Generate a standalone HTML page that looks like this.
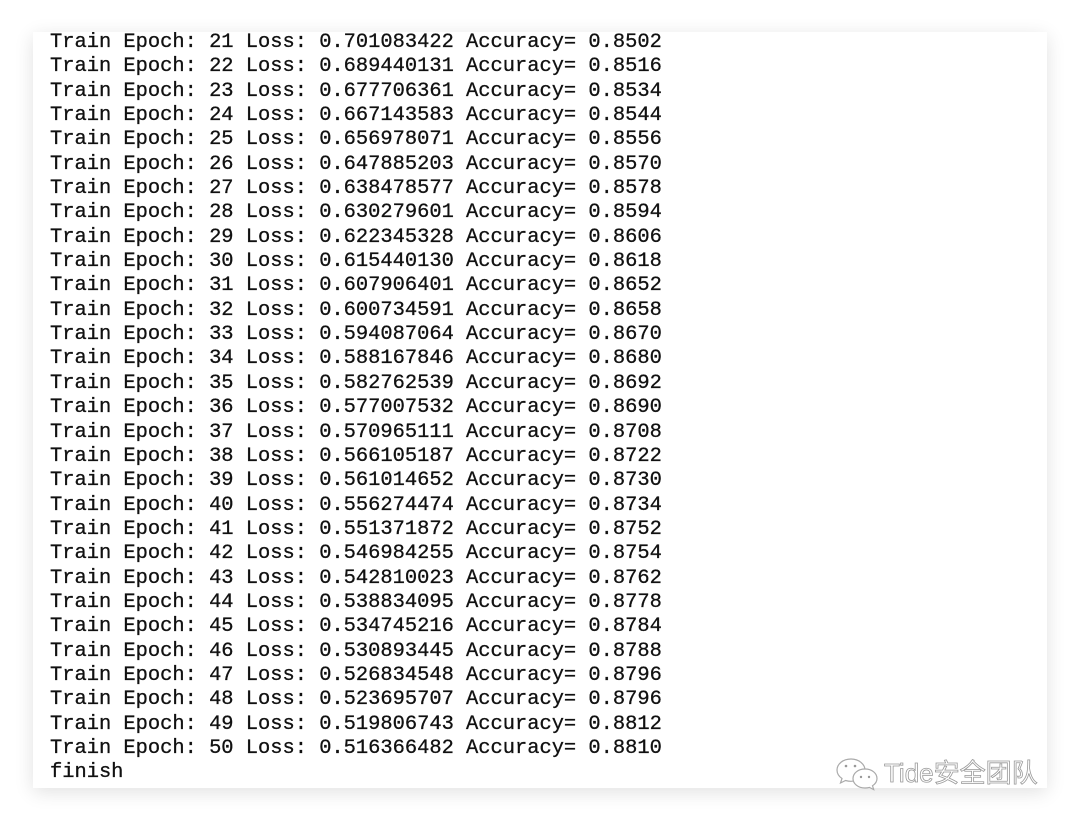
<!DOCTYPE html>
<html><head><meta charset="utf-8"><style>
html,body{margin:0;padding:0;background:#fff;width:1080px;height:822px;overflow:hidden;position:relative}
.card{position:absolute;left:33px;top:32px;width:1014px;height:756px;background:#fff;box-shadow:0 4px 18px rgba(0,0,0,0.12);overflow:hidden}
pre{position:absolute;left:17px;top:-1px;margin:0;font-family:"Liberation Mono",monospace;font-size:20.4px;line-height:24.34px;color:#111;-webkit-text-stroke:0.3px #111}
.wm{position:absolute;left:884px;top:757px;font-family:"Liberation Sans","Noto Sans CJK SC",sans-serif;font-size:26px;line-height:32px;color:#fff;-webkit-text-stroke:0.8px #999;white-space:nowrap}
</style></head><body>
<div class="card"><pre>Train Epoch: 21 Loss: 0.701083422 Accuracy= 0.8502
Train Epoch: 22 Loss: 0.689440131 Accuracy= 0.8516
Train Epoch: 23 Loss: 0.677706361 Accuracy= 0.8534
Train Epoch: 24 Loss: 0.667143583 Accuracy= 0.8544
Train Epoch: 25 Loss: 0.656978071 Accuracy= 0.8556
Train Epoch: 26 Loss: 0.647885203 Accuracy= 0.8570
Train Epoch: 27 Loss: 0.638478577 Accuracy= 0.8578
Train Epoch: 28 Loss: 0.630279601 Accuracy= 0.8594
Train Epoch: 29 Loss: 0.622345328 Accuracy= 0.8606
Train Epoch: 30 Loss: 0.615440130 Accuracy= 0.8618
Train Epoch: 31 Loss: 0.607906401 Accuracy= 0.8652
Train Epoch: 32 Loss: 0.600734591 Accuracy= 0.8658
Train Epoch: 33 Loss: 0.594087064 Accuracy= 0.8670
Train Epoch: 34 Loss: 0.588167846 Accuracy= 0.8680
Train Epoch: 35 Loss: 0.582762539 Accuracy= 0.8692
Train Epoch: 36 Loss: 0.577007532 Accuracy= 0.8690
Train Epoch: 37 Loss: 0.570965111 Accuracy= 0.8708
Train Epoch: 38 Loss: 0.566105187 Accuracy= 0.8722
Train Epoch: 39 Loss: 0.561014652 Accuracy= 0.8730
Train Epoch: 40 Loss: 0.556274474 Accuracy= 0.8734
Train Epoch: 41 Loss: 0.551371872 Accuracy= 0.8752
Train Epoch: 42 Loss: 0.546984255 Accuracy= 0.8754
Train Epoch: 43 Loss: 0.542810023 Accuracy= 0.8762
Train Epoch: 44 Loss: 0.538834095 Accuracy= 0.8778
Train Epoch: 45 Loss: 0.534745216 Accuracy= 0.8784
Train Epoch: 46 Loss: 0.530893445 Accuracy= 0.8788
Train Epoch: 47 Loss: 0.526834548 Accuracy= 0.8796
Train Epoch: 48 Loss: 0.523695707 Accuracy= 0.8796
Train Epoch: 49 Loss: 0.519806743 Accuracy= 0.8812
Train Epoch: 50 Loss: 0.516366482 Accuracy= 0.8810
finish</pre></div>
<svg style="position:absolute;left:834px;top:756px" width="48" height="36" viewBox="0 0 48 36">
<g fill="#fff" stroke="#aaa" stroke-width="1.2">
<path d="M17 3c-8 0-14 5-14 11 0 3.5 2 6.5 5 8.5l-1.5 4.5 5-2.5c1.8.5 3.6.8 5.5.8 8 0 14-5 14-11S25 3 17 3z"/>
<path d="M31 13c-7 0-12 4.3-12 9.5S24 32 31 32c1.6 0 3-.2 4.4-.6l4.3 2.2-1.2-3.8c2.7-1.800 4.5-4.4 4.5-7.3C43 17.3 38 13 31 13z"/>
</g>
<g fill="#999"><circle cx="12" cy="10" r="1.3"/><circle cx="21" cy="10" r="1.3"/><circle cx="27" cy="21" r="1.2"/><circle cx="35" cy="21" r="1.2"/></g>
</svg>
<div class="wm">Tide安全团队</div>
</body></html>
